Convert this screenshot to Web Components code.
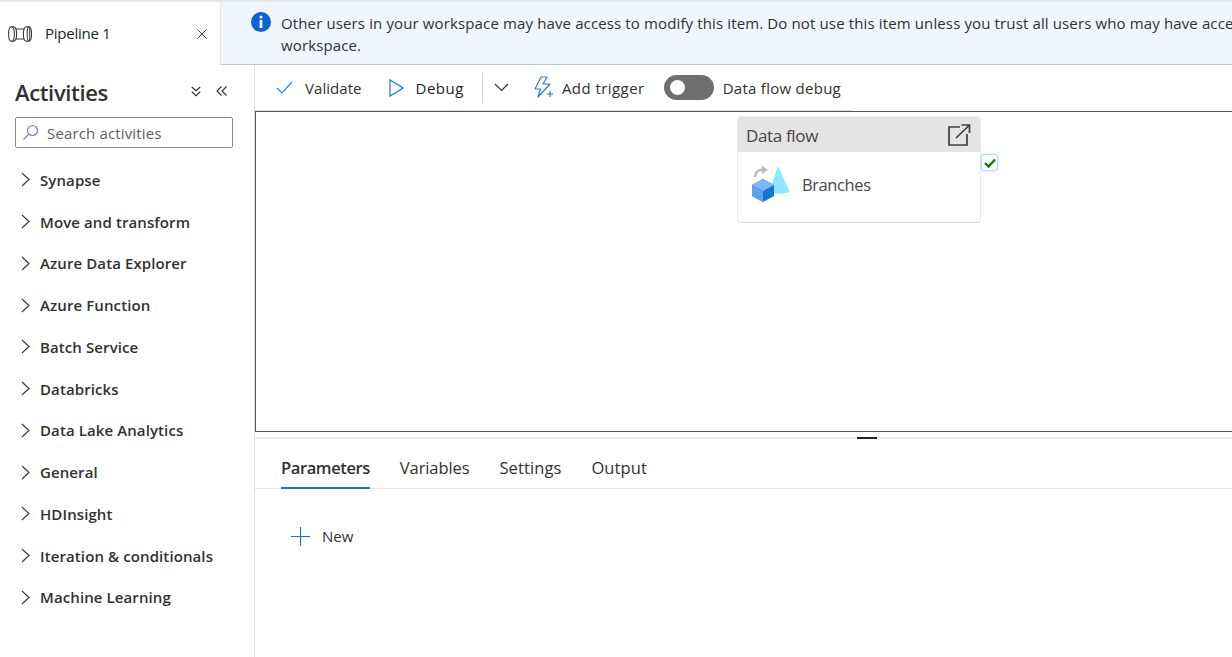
<!DOCTYPE html>
<html>
<head>
<meta charset="utf-8">
<title>Pipeline 1</title>
<style>
  html, body { margin: 0; padding: 0; height: 100%; overflow: hidden; background: #fff; }
  body { font-family: "Open Sans", "Noto Sans", sans-serif; color: #323130; }
</style>
</head>
<body>
<app-shell></app-shell>

<script>
// small helper so each component only has to give its css + markup
class Base extends HTMLElement {
  connectedCallback() {
    if (this.shadowRoot) return;
    this.attachShadow({ mode: 'open' }).innerHTML = `<style>${this.css}</style>${this.html}`;
  }
}

class PipelineTab extends Base {
  get css() { return `
    :host { display: flex; align-items: center; width: 220px; box-sizing: border-box; padding: 0 13px 0 8px; height: 63px; }
    svg { display: block; flex: none; }
    span { flex: 1; margin: 0 0 2px 13px; font-size: 15px; letter-spacing: -.25px; color: #201f1e; }
  `; }
  get html() { return `
    <svg width="24" height="16" viewBox="0 0 24 16" fill="none" stroke="#3b3a39" stroke-width="1.100">
      <ellipse cx="3.500" cy="8" rx="2.900" ry="7.300"/>
      <path d="M3.500.7h2c1.800 0 3.100 3.300 3.100 7.300s-1.300 7.300-3.100 7.300h-2"/>
      <path d="M8 3h8M8 13h8"/>
      <path d="M15.400 8c0-4 1.300-7.300 3.100-7.300h2c1.800 0 3.100 3.300 3.100 7.300s-1.300 7.300-3.100 7.300h-2c-1.800 0-3.100-3.300-3.100-7.300z"/>
      <ellipse cx="20.500" cy="8" rx="1.300" ry="7.300"/>
    </svg>
    <span>Pipeline 1</span>
    <svg width="10" height="10" viewBox="0 0 10 10" stroke="#484644" stroke-width="1"><path d="M.5.5l9 9M9.500.5l-9 9"/></svg>
  `; }
}
customElements.define('pipeline-tab', PipelineTab);

class InfoBanner extends Base {
  get css() { return `
    :host { display: flex; flex: 1; min-width: 0; height: 63px; box-sizing: border-box; background: #eff6fc; border-bottom: 1px solid #c8c8c8; border-left: 1px solid #e6e6e6; overflow: hidden; padding: 10px 0 0 30px; }
    svg { flex: none; display: block; }
    div { margin-left: 10px; white-space: nowrap; font-size: 15px; line-height: 22px; letter-spacing: .13px; color: #323130; }
  `; }
  get html() { return `
    <svg width="20" height="20" viewBox="0 0 20 20"><circle cx="10" cy="10" r="10" fill="#0f62d6"/><rect x="8.500" y="3.500" width="3" height="3" rx="1.500" fill="#fff"/><rect x="8.600" y="8" width="2.800" height="8" fill="#fff"/></svg>
    <div>Other users in your workspace may have access to modify this item. Do not use this item unless you trust all users who may have access to this<br>workspace.</div>
  `; }
}
customElements.define('info-banner', InfoBanner);

class ActivityItem extends Base {
  get css() { return `
    :host { display: flex; align-items: center; height: 41.75px; padding-left: 21px; }
    svg { display: block; flex: none; }
    span { margin-left: 10px; font-size: 15px; font-weight: 600; letter-spacing: .1px; color: #323130; }
  `; }
  get html() { return `
    <svg width="9" height="15" viewBox="0 0 9 15" fill="none" stroke="#323130" stroke-width="1.100"><path d="M1 1l7 6.500L1 14"/></svg>
    <span><slot></slot></span>
  `; }
}
customElements.define('activity-item', ActivityItem);

class ActivitiesPane extends Base {
  get css() { return `
    :host { display: block; width: 255px; flex: none; box-sizing: border-box; border-right: 1px solid #e1dfdd; }
    .head { display: flex; align-items: center; height: 52px; padding: 0 27px 0 15px; }
    h2 { flex: 1; margin: 2px 0 0; font-size: 22px; font-weight: 600; letter-spacing: -.35px; color: #323130; }
    .head svg { display: block; margin-left: 15px; }
    .search { display: flex; align-items: center; margin-left: 15px; width: 218px; height: 31px; box-sizing: border-box; border: 1px solid #8a8886; border-radius: 2px; padding-left: 6px; }
    .search span { margin: 1px 0 0 8px; font-size: 15px; letter-spacing: .15px; color: #605e5c; }
    .list { margin-top: 11px; }
  `; }
  get html() { return `
    <div class="head">
      <h2>Activities</h2>
      <svg width="10" height="11" viewBox="0 0 10 11" fill="none" stroke="#323130" stroke-width="1.200"><path d="M.8 1L5 4.800 9.200 1M.8 5.800L5 9.600l4.200-3.800"/></svg>
      <svg width="11" height="10" viewBox="0 0 11 10" fill="none" stroke="#323130" stroke-width="1.100"><path d="M5.500.5L1 5l4.500 4.500M10.500.5L6 5l4.500 4.500"/></svg>
    </div>
    <div class="search">
      <svg width="17" height="17" viewBox="0 0 17 17" fill="none" stroke="#8d7fe6" stroke-width="1.200"><circle cx="10.500" cy="6.500" r="5" stroke="#6f7fe0"/><path d="M7 10L1.500 15.500"/></svg>
      <span>Search activities</span>
    </div>
    <div class="list"><slot></slot></div>
  `; }
}
customElements.define('activities-pane', ActivitiesPane);

class ToolBar extends Base {
  get css() { return `
    :host { display: flex; align-items: center; height: 46px; flex: none; box-sizing: border-box; font-size: 15px; color: #323130; }
    .wrap { display: flex; align-items: center; height: 46px; width: 597px; padding-left: 21px; box-sizing: border-box; border-bottom: 1px solid #dcdcdc; }
    svg { display: block; flex: none; }
    .sep { width: 1px; height: 30px; background: #d5d5d5; margin: 0 11px 0 18px; flex: none; }
    .tog { width: 50px; height: 25px; border-radius: 13px; background: #6e6e6e; position: relative; margin: 0 9px 0 19px; flex: none; }
    .tog i { position: absolute; left: 6px; top: 5px; width: 15px; height: 15px; border-radius: 50%; background: #fff; }
  `; }
  get html() { return `
    <div class="wrap">
      <svg width="17" height="13" viewBox="0 0 17 13" fill="none" stroke="#2b88d8" stroke-width="1.200"><path d="M1 7l5 5L16 1"/></svg>
      <span style="margin-left:12px;letter-spacing:.05px">Validate</span>
      <svg style="margin-left:27px" width="15" height="18" viewBox="0 0 15 18" fill="none" stroke="#1f7fd6" stroke-width="1.300"><path d="M1 1l13 8-13 8z"/></svg>
      <span style="margin-left:12px;letter-spacing:.5px;color:#201f1e">Debug</span>
      <div class="sep"></div>
      <svg width="15" height="9" viewBox="0 0 15 9" fill="none" stroke="#323130" stroke-width="1.200"><path d="M1 1l6.500 6.500L14 1"/></svg>
      <svg style="margin-left:24px" width="21" height="23" viewBox="0 0 21 23" fill="none" stroke="#2b7cd3" stroke-width="1.200" stroke-linejoin="round"><path d="M8 1h6l-4 7h7L5 21l2.500-8H2z"/><path d="M17 15v6M14 18h6"/></svg>
      <span style="margin-left:8px;letter-spacing:.45px">Add trigger</span>
      <div class="tog"><i></i></div>
      <span style="letter-spacing:.27px">Data flow debug</span>
    </div>
  `; }
}
customElements.define('tool-bar', ToolBar);

class ActivityNode extends Base {
  get css() { return `
    :host { position: absolute; left: 482px; top: 5px; width: 242px; height: 105px; box-sizing: border-box; background: #fff; border-radius: 3px; box-shadow: 0 0 0 1px rgba(0,0,0,.07), 0 1px 1px rgba(0,0,0,.1); }
    .title { display: flex; align-items: center; justify-content: space-between; height: 35px; padding: 0 9px 0 8px; background: #e4e4e4; border-radius: 3px 3px 0 0; font-size: 17px; letter-spacing: -.35px; color: #444; }
    .title span { margin-top: 1px; }
    .title svg { display: block; }
    .body { display: flex; align-items: center; padding: 13px 0 0 14px; font-size: 16.5px; letter-spacing: -.4px; color: #484644; }
    .body svg { display: block; flex: none; margin-right: 11px; }
    .ok { position: absolute; left: 244px; top: 38px; width: 15px; height: 15px; box-sizing: border-box; border-radius: 3px; background: #fff; box-shadow: 0 0 2px 1px rgba(90,160,240,.55); display: flex; align-items: center; justify-content: center; }
  `; }
  get html() { return `
    <div class="title">
      <span>Data flow</span>
      <svg width="23" height="22" viewBox="0 0 23 22" fill="none" stroke="#3f3f3f" stroke-width="1.700"><path d="M12 3H1v18h18V10"/><path d="M8 14L21.500 1M13.500 1h8v8"/></svg>
    </div>
    <div class="body">
      <svg width="39" height="38" viewBox="0 0 39 38">
        <path d="M26 1L37.500 26c-2 3.500-15 3.500-20 .5z" fill="#8fe6ff"/>
        <path d="M3 12c0-5 4-8 9-7" fill="none" stroke="#bdbdbd" stroke-width="2.600"/>
        <path d="M10 .5l6 4.500-6 4z" fill="#bdbdbd"/>
        <path d="M11 14l11 6v11l-11 6-11-6V20z" fill="#0f7ad8"/>
        <path d="M11 14l11 6-11 6-11-6z" fill="#7eb6f5"/>
        <path d="M0 20l11 6v11l-11-6z" fill="#5ea2ef"/>
      </svg>
      <span>Branches</span>
    </div>
    <div class="ok"><svg width="12" height="10" viewBox="0 0 12 10" fill="none" stroke="#107c10" stroke-width="2.400"><path d="M1 5l3.500 3.500L11 1.500"/></svg></div>
  `; }
}
customElements.define('activity-node', ActivityNode);

class DesignCanvas extends Base {
  get css() { return `
    :host { display: block; position: relative; height: 321px; box-sizing: border-box; border: 1px solid #555; border-right: 0; background: #fff; flex: none; }
  `; }
  get html() { return `<slot></slot>`; }
}
customElements.define('design-canvas', DesignCanvas);

class SplitBar extends Base {
  get css() { return `
    :host { display: block; height: 6px; flex: none; }
    .line { height: 2px; margin-top: 5px; background: #ececec; display: flex; justify-content: center; padding-left: 246px; box-sizing: border-box; }
    i { display: block; width: 20px; height: 2px; background: #222; }
  `; }
  get html() { return `<div class="line"><i></i></div>`; }
}
customElements.define('split-bar', SplitBar);

class BottomPanel extends Base {
  get css() { return `
    :host { display: block; flex: 1; font-size: 16.5px; letter-spacing: .1px; color: #323130; }
    .tabs { display: flex; gap: 30px; padding-left: 26px; height: 51px; box-sizing: border-box; border-bottom: 1px solid #e6e6e6; }
    .tabs span { display: block; height: 51px; box-sizing: border-box; padding-top: 18px; line-height: 24px; }
    .tabs .on { font-weight: 600; letter-spacing: -.4px; border-bottom: 2px solid #0f78d4; }
    .new { display: flex; align-items: center; margin: 37px 0 0 36px; font-size: 15px; letter-spacing: .05px; }
    .new svg { display: block; margin-right: 12px; }
  `; }
  get html() { return `
    <div class="tabs"><span class="on">Parameters</span><span style="letter-spacing:-.1px">Variables</span><span>Settings</span><span>Output</span></div>
    <div class="new">
      <svg width="19" height="19" viewBox="0 0 19 19" stroke="#0f78d4" stroke-width="1.100"><path d="M9.500 0v19M0 9.500h19"/></svg>
      <span>New</span>
    </div>
  `; }
}
customElements.define('bottom-panel', BottomPanel);

class AppShell extends Base {
  get css() { return `
    :host { display: flex; flex-direction: column; width: 1232px; height: 657px; overflow: hidden; box-sizing: border-box; border-top: 2px solid #e6e6e6; }
    .top { display: flex; flex: none; height: 63px; }
    .main { display: flex; flex: 1; min-height: 0; }
    .work { display: flex; flex-direction: column; flex: 1; min-width: 0; }
  `; }
  get html() { return `
    <div class="top"><pipeline-tab></pipeline-tab><info-banner></info-banner></div>
    <div class="main">
      <activities-pane>
        <activity-item>Synapse</activity-item>
        <activity-item>Move and transform</activity-item>
        <activity-item>Azure Data Explorer</activity-item>
        <activity-item>Azure Function</activity-item>
        <activity-item>Batch Service</activity-item>
        <activity-item>Databricks</activity-item>
        <activity-item>Data Lake Analytics</activity-item>
        <activity-item>General</activity-item>
        <activity-item>HDInsight</activity-item>
        <activity-item>Iteration &amp; conditionals</activity-item>
        <activity-item>Machine Learning</activity-item>
      </activities-pane>
      <div class="work">
        <tool-bar></tool-bar>
        <design-canvas><activity-node></activity-node></design-canvas>
        <split-bar></split-bar>
        <bottom-panel></bottom-panel>
      </div>
    </div>
  `; }
}
customElements.define('app-shell', AppShell);
</script>
</body>
</html>
